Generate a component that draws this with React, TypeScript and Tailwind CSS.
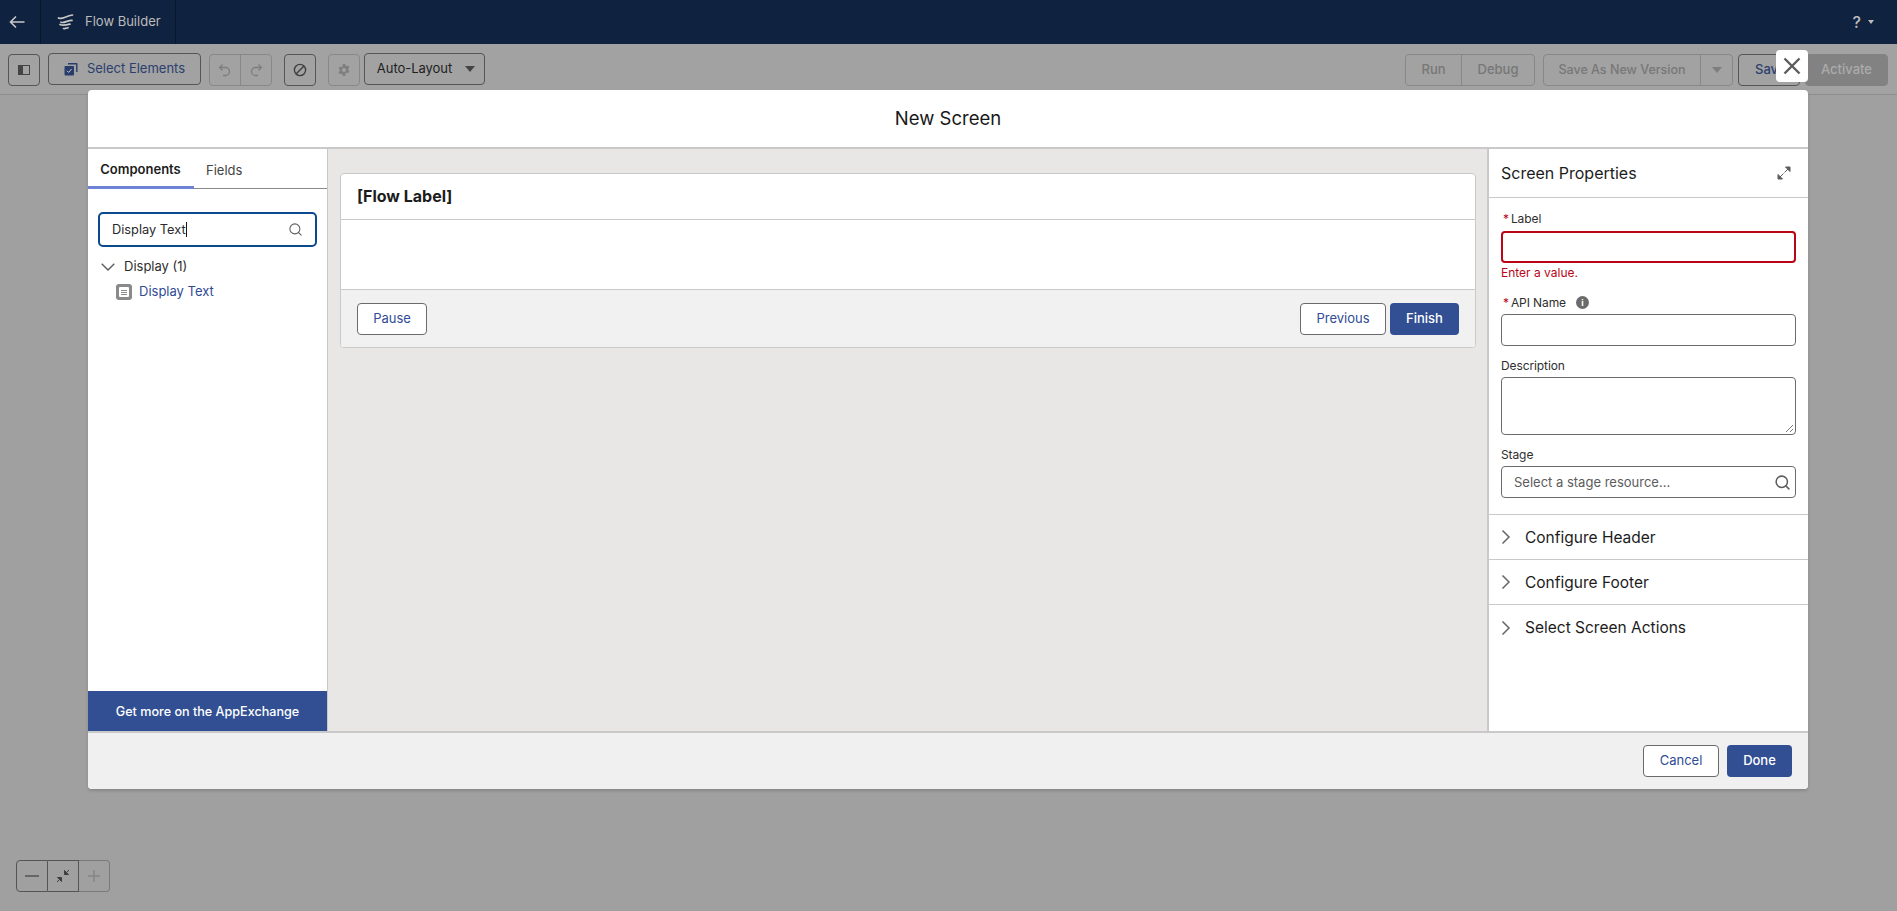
import { Search } from "lucide-react";
import React from "react";

const blue = "text-[#2f4c94]";

function ToolBtn({
  className,
  children,
}: {
  className?: string;
  children: React.ReactNode;
}) {
  return (
    <div
      className={`h-8 flex items-center justify-center border rounded-[4px] text-[13px] ${className}`}
    >
      {children}
    </div>
  );
}

function FlowIcon() {
  return (
    <svg width="18" height="18" viewBox="0 0 18 18" fill="none" stroke="#c8c8c8" strokeWidth="1.7" strokeLinecap="round">
      <path d="M1.5 5c3.5 2 7-2 14-3" />
      <path d="M4 9.2c3 1.4 6-1.8 11-1.8" />
      <path d="M3 11.5c3 1.4 6 .6 10-.4" />
      <path d="M6.5 15.5c1.5.4 3-.4 4.5-.8" />
    </svg>
  );
}

function Field({
  label,
  required,
  info,
  className,
  children,
}: {
  label: string;
  required?: boolean;
  info?: boolean;
  className?: string;
  children: React.ReactNode;
}) {
  return (
    <div className={className}>
      <div className="h-[17px] flex items-center text-[12px] tracking-[-0.1px] text-[#2e2e2e]">
        {required && <span className="text-[#ba0517] ml-[2px] mr-[2px]">*</span>}
        {label}
        {info && (
          <span className="ml-[10px] w-[13px] h-[13px] rounded-full bg-[#6b6b6b] text-white text-[9px] font-bold flex items-center justify-center">
            i
          </span>
        )}
      </div>
      {children}
    </div>
  );
}

function Section({ label, last }: { label: string; last?: boolean }) {
  return (
    <div className={`h-[45px] flex items-center pl-[12px] ${last ? "" : "border-b border-[#c9c9c9]"}`}>
      <svg width="10" height="16" viewBox="0 0 10 16" fill="none" stroke="#666" strokeWidth="1.5">
        <path d="M1.5 1.5L8 8l-6.5 6.5" />
      </svg>
      <span className="ml-[14px] pt-[1px] text-[15.5px] text-[#1c1c1c]">{label}</span>
    </div>
  );
}

export default function App() {
  return (
    <div className="relative h-[911px] overflow-hidden bg-[#a0a0a0] font-['Inter','Noto_Sans',sans-serif]">
      {/* top bar */}
      <div className="h-[44px] bg-[#0f223f] flex items-stretch text-[#bcbcbc]">
        <div className="w-[41px] border-r border-[#0a1729] flex items-center pl-[9px]">
          <svg width="16" height="14" viewBox="0 0 16 14" fill="none" stroke="#c8c8c8" strokeWidth="1.6">
            <path d="M15.5 7H1.5M7 1.5L1.5 7L7 12.5" />
          </svg>
        </div>
        <div className="w-[135px] border-r border-[#0a1729] flex items-center pl-[16px]">
          <FlowIcon />
          <span className="ml-[10px] text-[13px]">Flow Builder</span>
        </div>
        <div className="ml-auto flex items-center pr-[23px]">
          <span className="text-[16px] font-medium mr-[7px]">?</span>
          <span className="w-0 h-0 border-x-[3px] border-x-transparent border-t-[4px] border-t-[#bcbcbc]" />
        </div>
      </div>

      {/* toolbar */}
      <div className="h-[51px] bg-[#a2a2a2] border-b border-[#8e8e8e] flex items-center pl-[8px] pr-[9px]">
        <ToolBtn className="w-[32px] border-[#555] translate-y-px">
          <span className="w-[12px] h-[10px] border border-[#444] flex">
            <span className="w-[4px] bg-[#444]" />
          </span>
        </ToolBtn>
        <ToolBtn className="ml-[8px] w-[153px] border-[#555] text-[#2c3f6e]">
          <svg width="14" height="14" viewBox="0 0 14 14" className="mr-[9px]">
            <path d="M4 1h8.5a1 1 0 0 1 1 1v8h-1.4V2.4H4z" fill="#283c6c" />
            <rect x="0.5" y="4" width="9.5" height="9.5" rx="1" fill="#283c6c" />
            <path d="M3 8.8l1.6 1.6L7.6 7" stroke="#c8c8c8" strokeWidth="1" fill="none" />
          </svg>
          Select Elements
        </ToolBtn>
        <div className="ml-[8px] translate-y-px h-8 w-[63px] flex border border-[#888] rounded-[4px]">
          <div className="flex-1 border-r border-[#888] flex items-center justify-center">
            <svg width="14" height="14" viewBox="0 0 14 14" fill="none" stroke="#7e7e7e" strokeWidth="1.3">
              <path d="M4.5 1.5L1.5 4.5l3 3M1.5 4.5h6a4 4 0 0 1 0 8H5" />
            </svg>
          </div>
          <div className="flex-1 flex items-center justify-center">
            <svg width="14" height="14" viewBox="0 0 14 14" fill="none" stroke="#7e7e7e" strokeWidth="1.3">
              <path d="M9.5 1.5l3 3-3 3M12.500 4.500h-6a4 4 0 0 0 0 8H9" />
            </svg>
          </div>
        </div>
        <ToolBtn className="ml-[12px] w-[32px] border-[#555] translate-y-px">
          <svg width="14" height="14" viewBox="0 0 14 14" fill="none" stroke="#3f3f3f" strokeWidth="1.4">
            <circle cx="7" cy="7" r="5.6" />
            <path d="M3 11L11 3" />
          </svg>
        </ToolBtn>
        <ToolBtn className="ml-[12px] w-[32px] border-[#888] translate-y-px">
          <svg width="14" height="14" viewBox="0 0 14 14" fill="#7e7e7e">
            <path
              fillRule="evenodd"
              d="M5.8 1h2.4l.3 1.6 1.2.6 1.5-.6 1.2 2-1.2 1.1v1.4l1.2 1.1-1.2 2-1.5-.6-1.2.6L8.2 13H5.8l-.3-1.8-1.2-.6-1.5.6-1.2-2 1.2-1.1V6.7L1.6 5.6l1.2-2 1.5.6 1.2-.6zM7 5a2 2 0 1 0 0 4 2 2 0 0 0 0-4z"
            />
          </svg>
        </ToolBtn>
        <ToolBtn className="ml-[4px] w-[121px] border-[#555] text-[#1e1e1e]">
          <span className="ml-[3px] tracking-[-0.05px]">Auto-Layout</span>
          <span className="ml-[13px] w-0 h-0 border-x-[5px] border-x-transparent border-t-[6px] border-t-[#444]" />
        </ToolBtn>

        <div className="ml-auto translate-y-px h-8 w-[130px] flex border border-[#888] rounded-[4px] text-[13px] text-[#777] font-medium">
          <div className="w-[56px] border-r border-[#888] flex items-center justify-center">Run</div>
          <div className="flex-1 flex items-center justify-center">Debug</div>
        </div>
        <div className="ml-[8px] translate-y-px h-8 w-[190px] flex border border-[#888] rounded-[4px] text-[12.5px] text-[#777] font-medium">
          <div className="flex-1 border-r border-[#888] flex items-center justify-center">Save As New Version</div>
          <div className="w-[31px] flex items-center justify-center">
            <span className="w-0 h-0 border-x-[5px] border-x-transparent border-t-[6px] border-t-[#7e7e7e]" />
          </div>
        </div>
        <ToolBtn className="ml-[5px] w-[62px] border-[#555] text-[#2c3f6e] justify-start pl-[16px] font-medium translate-y-px">
          Save
        </ToolBtn>
        <ToolBtn className="ml-[5px] w-[83px] border-[#828282] bg-[#828282] text-[#ababab] font-medium translate-y-px">
          Activate
        </ToolBtn>
      </div>

      {/* zoom controls */}
      <div className="absolute left-[16px] top-[860px] h-8 w-[94px] flex">
        <div className="w-[32px] border border-[#555] rounded-l-[4px] flex items-center justify-center">
          <span className="w-[14px] h-[2px] bg-[#666]" />
        </div>
        <div className="w-[31px] border-y border-r border-[#555] flex items-center justify-center">
          <svg width="14" height="14" viewBox="0 0 14 14" fill="#3f3f3f" stroke="#3f3f3f">
            <path d="M13 1L9 5M8.5 1.5v4h4z" />
            <path d="M1 13l4-4M5.5 12.500v-4h-4z" />
          </svg>
        </div>
        <div className="flex-1 border-y border-r border-[#7a7a7a] rounded-r-[4px] flex items-center justify-center">
          <svg width="14" height="14" viewBox="0 0 14 14" stroke="#858585" strokeWidth="1.5">
            <path d="M7 1v12M1 7h12" />
          </svg>
        </div>
      </div>

      {/* close */}
      <div className="absolute z-10 left-[1776px] top-[50px] w-[32px] h-[32px] bg-white rounded-[4px] flex items-center justify-center">
        <svg width="18" height="18" viewBox="0 0 18 18" fill="none" stroke="#5c5c5c" strokeWidth="2.4">
          <path d="M1.5 1.5l15 15M16.500 1.500l-15 15" />
        </svg>
      </div>

      {/* modal */}
      <div className="absolute left-[88px] top-[90px] w-[1720px] h-[699px] bg-white rounded-[4px] overflow-hidden flex flex-col shadow-[0_2px_3px_rgba(0,0,0,0.16)]">
        <div className="h-[59px] shrink-0 pt-[1px] border-b-2 border-[#c9c9c9] flex items-center justify-center text-[18.5px] text-[#181818]">
          New Screen
        </div>

        <div className="flex-1 flex min-h-0">
          {/* palette */}
          <div className="w-[240px] shrink-0 border-r border-[#c9c9c9] flex flex-col">
            <div className="h-[40px] border-b border-[#8a8a8a] flex items-stretch text-[13px]">
              <div className="w-[106px] -mb-px pt-[4px] pr-[1px] border-b-[3px] border-[#6f83d6] flex items-center justify-center font-semibold text-[#1c1c1c]">
                Components
              </div>
              <div className="ml-[12px] pt-[4px] flex items-center text-[#444]">Fields</div>
            </div>
            <div className="mt-[23px] mx-[10px] h-[35px] border-[2.5px] border-[#0b4a8c] rounded-[5px] flex items-center pl-[12px] pr-[12px] text-[12.8px] text-[#2a2a2a]">
              Display Text
              <span className="w-px h-[15px] bg-[#181818]" />
              <Search size={15} strokeWidth={1.7} className="ml-auto text-[#5c5c5c]" />
            </div>
            <div className="mt-[9px] ml-[13px] h-[22px] flex items-center text-[13px] text-[#2e2e2e]">
              <svg width="14" height="8" viewBox="0 0 14 8" fill="none" stroke="#5c5c5c" strokeWidth="1.4">
                <path d="M.7.7L7 7l6.3-6.3" />
              </svg>
              <span className="ml-[9px]">Display (1)</span>
            </div>
            <div className="mt-[3px] ml-[28px] h-[22px] flex items-center text-[13px] text-[#2f4c94]">
              <span className="w-[16px] h-[16px] rounded-[3px] bg-[#8a8a8a] flex items-center justify-center">
                <span className="w-[10px] h-[10px] bg-white rounded-[1px] flex flex-col items-center justify-center gap-[1px]">
                  <span className="w-[6px] h-px bg-[#8a8a8a]" />
                  <span className="w-[6px] h-px bg-[#8a8a8a]" />
                  <span className="w-[6px] h-px bg-[#8a8a8a]" />
                </span>
              </span>
              <span className="ml-[7px]">Display Text</span>
            </div>
            <div className="mt-auto h-[40px] pt-[2px] bg-[#324f93] text-white text-[12.6px] font-medium flex items-center justify-center">
              Get more on the AppExchange
            </div>
          </div>

          {/* canvas */}
          <div className="flex-1 bg-[#e8e7e5] pt-[24px] pl-[12px] pr-[11px]">
            <div className="h-[175px] bg-white border border-[#c9c9c9] rounded-[4px] overflow-hidden flex flex-col">
              <div className="h-[46px] border-b border-[#c9c9c9] pl-[16px] pb-[2px] flex items-center text-[16px] font-bold text-[#1c1c1c]">
                [Flow Label]
              </div>
              <div className="h-[70px] border-b border-[#c9c9c9]" />
              <div className="flex-1 bg-[#f1f1f1] px-[16px] flex items-center">
                <div className={`h-8 w-[70px] bg-white border border-[#6b6b6b] rounded-[4px] flex items-center justify-center text-[13px] ${blue}`}>
                  Pause
                </div>
                <div className={`ml-auto h-8 w-[86px] bg-white border border-[#6b6b6b] rounded-[4px] flex items-center justify-center text-[13px] ${blue}`}>
                  Previous
                </div>
                <div className="ml-[4px] h-8 w-[69px] bg-[#324f93] rounded-[4px] flex items-center justify-center text-[13px] font-medium text-white">
                  Finish
                </div>
              </div>
            </div>
          </div>

          {/* properties */}
          <div className="w-[321px] shrink-0 border-l-2 border-[#c9c9c9] flex flex-col">
            <div className="h-[49px] border-b border-[#c9c9c9] pl-[12px] pr-[16px] flex items-center text-[16px] text-[#1c1c1c]">
              Screen Properties
              <svg width="14" height="14" viewBox="0 0 14 14" fill="#5c5c5c" stroke="#5c5c5c" className="ml-auto -translate-x-[1px]">
                <path d="M7.5 6.5l5-5M8.5 1H13v4.500z" />
                <path d="M6.500 7.500l-5 5M5.500 13H1V8.500z" />
              </svg>
            </div>
            <div className="h-[317px] border-b border-[#c9c9c9] px-[12px] pt-[12px]">
              <Field label="Label" required>
                <div className="mt-[4px] h-[32px] border-2 border-[#ba0517] rounded-[4px]" />
                <div className="mt-[1px] text-[12px] leading-[17px] text-[#ba0517]">Enter a value.</div>
              </Field>
              <Field label="API Name" required info className="mt-[13px]">
                <div className="mt-[3px] h-[32px] border border-[#6b6b6b] rounded-[4px]" />
              </Field>
              <Field label="Description" className="mt-[11px]">
                <div className="relative mt-[3px] h-[58px] border border-[#6b6b6b] rounded-[4px]">
                  <svg width="9" height="9" viewBox="0 0 9 9" stroke="#7a7a7a" className="absolute right-[1px] bottom-[1px]">
                    <path d="M1 8l7-7M5 8l3-3" />
                  </svg>
                </div>
              </Field>
              <Field label="Stage" className="mt-[11px]">
                <div className="mt-[3px] h-[32px] pt-[1px] border border-[#6b6b6b] rounded-[4px] pl-[12px] pr-[4px] flex items-center text-[13px] text-[#5c5c5c]">
                  Select a stage resource...
                  <Search size={17} strokeWidth={2.2} className="ml-auto text-[#5c5c5c]" />
                </div>
              </Field>
            </div>
            <Section label="Configure Header" />
            <Section label="Configure Footer" />
            <Section label="Select Screen Actions" last />
          </div>
        </div>

        <div className="h-[58px] shrink-0 border-t-2 border-[#c9c9c9] bg-[#f0f0f0] pr-[16px] flex items-center justify-end">
          <div className={`h-8 w-[76px] bg-white border border-[#6b6b6b] rounded-[4px] flex items-center justify-center text-[13px] ${blue}`}>
            Cancel
          </div>
          <div className="ml-[8px] h-8 w-[65px] bg-[#324f93] rounded-[4px] flex items-center justify-center text-[13px] font-medium text-white">
            Done
          </div>
        </div>
      </div>
    </div>
  );
}
